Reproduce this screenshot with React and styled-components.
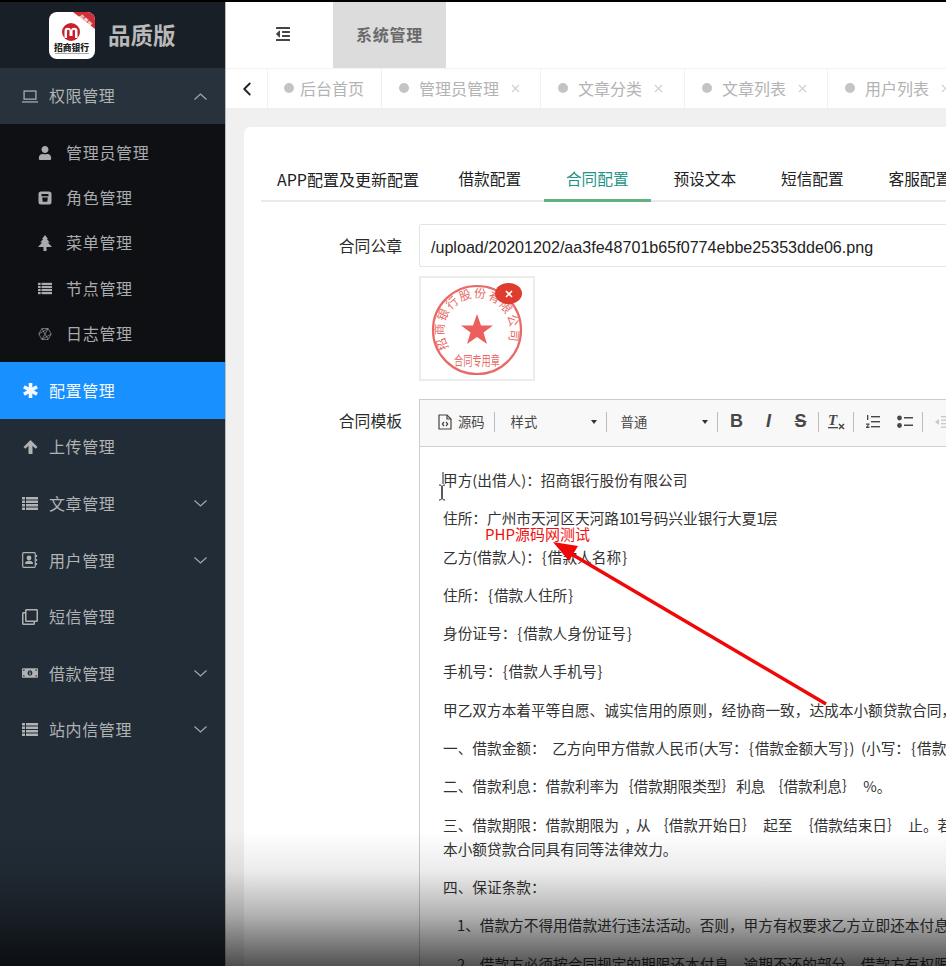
import React from 'react';
import styled, { createGlobalStyle } from 'styled-components';
import { FaUser, FaRegClone, FaMoneyBillAlt, FaOutdent } from 'react-icons/fa';
import { FiChevronLeft, FiX } from 'react-icons/fi';

const GlobalStyle = createGlobalStyle`
  html, body { margin: 0; padding: 0; background: #fff; }
  body { font-family: "Noto Sans CJK SC", "Liberation Sans", sans-serif; }
  * { box-sizing: border-box; }
`;

const Page = styled.div`
  position: relative;
  display: flex;
  width: 946px;
  height: 966px;
  overflow: hidden;
  border-top: 2px solid #000;
`;

const Shade = styled.div`
  position: absolute;
  left: 0;
  right: 0;
  bottom: 0;
  height: 135px;
  pointer-events: none;
  background: linear-gradient(to bottom, rgba(0,0,0,0) 0%, rgba(0,0,0,.08) 30%, rgba(0,0,0,.3) 62%, rgba(0,0,0,.68) 100%);
`;

const Sidebar = styled.aside`
  flex: 0 0 226px;
  background: #222c36;
  border-right: 1px solid #b9bcbf;
  color: #b4b6b8;
`;

const Brand = styled.div`
  display: flex;
  align-items: center;
  height: 66px;
  padding-left: 49px;
  gap: 13px;
  background: #191f27;
`;

const BrandName = styled.span`
  margin-bottom: 3px;
  font-size: 22.5px;
  font-weight: 700;
  color: #b9b9b9;
`;

const MenuRow = styled.div`
  display: flex;
  align-items: center;
  height: ${(p) => (p.$open ? '56px' : '56.6px')};
  padding: 0 18px 0 22px;
  font-size: 16px;
  letter-spacing: .6px;
  background: ${(p) => (p.$active ? '#1890ff' : p.$open ? '#27323d' : 'transparent')};
  color: ${(p) => (p.$active ? '#f4faff' : '#b0b2b4')};
`;

const MenuIcon = styled.span`
  display: flex;
  align-items: center;
  justify-content: center;
  width: 16px;
  height: 16px;
  margin-right: 11px;
  font-size: 16px;
`;

const MenuLabel = styled.span`
  flex: 1;
  padding-bottom: ${(p) => (p.$open ? 2 : 1)}px;
`;

const Caret = styled.svg`
  display: block;
  color: #a4a8ab;
`;

const SubMenu = styled.div`
  padding: 6px 0 5px;
  background: #0e1014;
`;

const SubRow = styled.div`
  display: flex;
  align-items: center;
  height: 45.4px;
  padding-left: 38px;
  font-size: 16px;
  letter-spacing: .7px;
  color: #a9abad;
`;

const SubIcon = styled.span`
  display: flex;
  align-items: center;
  justify-content: center;
  width: 14px;
  height: 14px;
  margin-right: 14px;
  font-size: 14px;
`;

const SubLabel = styled.span`
  padding-bottom: 2px;
`;

const Main = styled.main`
  flex: 1;
  min-width: 0;
  display: flex;
  flex-direction: column;
  background: #f0f0f0;
  overflow: hidden;
`;

const Header = styled.header`
  display: flex;
  align-items: stretch;
  flex: 0 0 66px;
  background: #fff;
`;

const Toggle = styled.div`
  display: flex;
  align-items: center;
  justify-content: center;
  width: 107px;
  padding: 0 0 3px 7px;
  font-size: 16px;
  color: #444;
`;

const HeaderTab = styled.div`
  display: flex;
  align-items: center;
  justify-content: center;
  width: 113px;
  padding-bottom: 3px;
  background: #dcdcdc;
  font-size: 16px;
  font-weight: 700;
  letter-spacing: .7px;
  color: #6a6a6a;
`;

const TabBar = styled.div`
  display: flex;
  flex: 0 0 41px;
  background: #fff;
  border-top: 1px solid #f2f2f2;
  border-bottom: 1px solid #eee;
`;

const Back = styled.div`
  display: flex;
  align-items: center;
  justify-content: center;
  flex: 0 0 41px;
  font-size: 22px;
  color: #222;
`;

const PageTab = styled.div`
  display: flex;
  align-items: center;
  flex: 0 0 ${(p) => p.$w}px;
  padding: 0 0 2px ${(p) => (p.$home ? 16 : 17)}px;
  border-left: 1px solid #f0f0f0;
  font-size: 16px;
  color: #b3b3b3;
  white-space: nowrap;
`;

const Dot = styled.i`
  flex: 0 0 10px;
  height: 10px;
  margin-right: ${(p) => (p.$home ? 6 : 10)}px;
  border-radius: 50%;
  background: #c4c4c4;
`;

const Close = styled.span`
  display: flex;
  margin: 2px 0 0 10px;
  font-size: 13px;
  color: #cfcfcf;
`;

const Card = styled.section`
  flex: 0 0 auto;
  width: 800px;
  height: 900px;
  margin: 18px 0 0 18px;
  padding: 30px 0 0 17px;
  background: #fff;
  border-radius: 6px 0 0 0;
`;

const ConfigTabs = styled.nav`
  display: flex;
  height: 45px;
  border-bottom: 2px solid #e9e9e9;
`;

const ConfigTab = styled.div`
  height: 45px;
  padding-top: 9px;
  padding-left: ${(p) => (p.$first ? '16px' : '22.4px')};
  padding-right: ${(p) => (p.$first ? '17px' : '22.4px')};
  font-size: ${(p) => (p.$first ? '16px' : '15.7px')};
  line-height: 26px;
  white-space: nowrap;
  color: ${(p) => (p.$active ? '#1f9488' : '#222')};
  border-bottom: ${(p) => (p.$active ? '3px solid #5fb382' : 'none')};
`;

const FormRow = styled.div`
  display: flex;
  margin-top: ${(p) => p.$mt}px;
`;

const Label = styled.label`
  flex: 0 0 141px;
  padding-top: 10px;
  text-align: right;
  font-size: 15.8px;
  line-height: 24px;
  color: #2b2b2b;
`;

const Field = styled.div`
  margin-left: 17px;
  flex: 1;
  min-width: 0;
`;

const Input = styled.div`
  height: 43px;
  padding-left: 11px;
  border: 1px solid #e4e4e4;
  border-radius: 2px;
  font-family: "Liberation Sans", sans-serif;
  font-size: 16.1px;
  line-height: 44px;
  color: #222;
`;

const Preview = styled.div`
  position: relative;
  width: 116px;
  height: 105px;
  margin-top: 9px;
  border: 2px solid #ececec;
`;

const Remove = styled.span`
  position: absolute;
  top: 5px;
  right: 11px;
  display: flex;
  align-items: center;
  justify-content: center;
  width: 27px;
  height: 21px;
  border-radius: 50%;
  background: #dd3c2f;
  color: #fff;
  font-size: 10px;
`;

const Editor = styled.div`
  border: 1px solid #ccc;
  height: 700px;
`;

const Toolbar = styled.div`
  display: flex;
  align-items: center;
  height: 47px;
  padding: 0 0 3px 18px;
  background: #f8f8f8;
  border-bottom: 1px solid #d1d1d1;
  color: #474747;
`;

const SourceBtn = styled.div`
  display: flex;
  align-items: center;
  gap: 6px;
  font-size: 13.3px;
  padding-right: 9px;
`;

const Sep = styled.span`
  flex: 0 0 1px;
  height: 20px;
  margin: ${(p) => p.$m || '0 1px'};
  background: #bcbcbc;
`;

const Combo = styled.div`
  display: flex;
  align-items: center;
  justify-content: space-between;
  width: ${(p) => p.$w}px;
  padding: 0 9px 0 ${(p) => p.$pl}px;
  font-size: 13.3px;
  &::after {
    content: "";
    border-top: 4px solid #333;
    border-left: 3.5px solid transparent;
    border-right: 3.5px solid transparent;
  }
`;

const ToolBtn = styled.button`
  display: flex;
  align-items: center;
  justify-content: center;
  flex: 0 0 32px;
  height: 24px;
  padding: 0;
  border: 0;
  background: none;
  color: ${(p) => (p.$off ? '#c9c9c9' : '#474747')};
  font-family: "Liberation Sans", sans-serif;
  font-size: 18px;
  font-weight: 700;
  font-style: ${(p) => (p.$italic ? 'italic' : 'normal')};
  text-decoration: ${(p) => (p.$strike ? 'line-through' : 'none')};
`;

const Content = styled.div`
  padding: 21px 0 0 23px;
  font-size: 14.67px;
  line-height: 24px;
  color: #333;
  white-space: pre;
`;

const Para = styled.p`
  margin: 0 0 ${(p) => (p.$tight ? 0 : 14.3)}px;
  padding-left: ${(p) => (p.$indent ? 14 : 0)}px;
`;

const Brace = styled.span`
  margin: 0 1px;
`;

const Digits = styled.span`
  letter-spacing: -1.4px;
`;

const Watermark = styled.span`
  position: absolute;
  left: 485px;
  top: 522px;
  font-size: 15px;
  line-height: 20px;
  color: #f01010;
  white-space: nowrap;
`;

const Arrow = styled.svg`
  position: absolute;
  left: 540px;
  top: 530px;
`;

const Cursor = styled.svg`
  position: absolute;
  left: 436px;
  top: 470px;
`;

const ChevronUp = () => (
  <Caret width="13" height="7" viewBox="0 0 13 7" fill="none" stroke="currentColor" strokeWidth="1.2">
    <path d="M.5 6.500l6-5.500 6 5.500" />
  </Caret>
);

const ChevronDown = () => (
  <Caret width="13" height="7" viewBox="0 0 13 7" fill="none" stroke="currentColor" strokeWidth="1.2">
    <path d="M.5.500l6 5.500 6-5.500" />
  </Caret>
);

const LaptopIcon = () => (
  <svg width="17" height="13" viewBox="0 0 17 13" fill="none" stroke="currentColor" strokeWidth="1.300">
    <rect x="2.200" y=".7" width="12.600" height="8.600" />
    <path d="M0 12.300h17" />
  </svg>
);

const ListIcon = () => (
  <svg width="16" height="13" viewBox="0 0 16 13" fill="currentColor">
    <rect y="0" width="3" height="2.500" />
    <rect y="3.500" width="3" height="2.500" />
    <rect y="7" width="3" height="2.500" />
    <rect y="10.500" width="3" height="2.500" />
    <rect x="4" y="0" width="12" height="2.500" />
    <rect x="4" y="3.500" width="12" height="2.500" />
    <rect x="4" y="7" width="12" height="2.500" />
    <rect x="4" y="10.500" width="12" height="2.500" />
  </svg>
);

const AsteriskIcon = () => (
  <svg width="15" height="15" viewBox="0 0 14 14" stroke="currentColor" strokeWidth="3.400">
    <path d="M7 0v14M.9 3.500l12.200 7M13.100 3.500L.9 10.500" />
  </svg>
);

const ArrowUpIcon = () => (
  <svg width="15" height="14" viewBox="0 0 15 14" fill="currentColor">
    <path d="M7.500 0l7 7-1.800 1.800-3.200-3V14h-4V5.800l-3.200 3L.5 7z" />
  </svg>
);

const TreeIcon = () => (
  <svg width="14" height="16" viewBox="0 0 14 16" fill="currentColor">
    <path d="M7 0l3 4H8.800l3 3.500H9.800L14 12H8.500v4h-3v-4H0l4.200-4.500H2.200l3-3.500H4z" />
  </svg>
);

const RoleIcon = () => (
  <svg width="14" height="14" viewBox="0 0 14 14">
    <path fillRule="evenodd" fill="currentColor" d="M3 .5h8A2.500 2.500 0 0 1 13.500 3v8a2.500 2.500 0 0 1-2.500 2.500H3A2.500 2.500 0 0 1 .5 11V3A2.500 2.500 0 0 1 3 .5zm.5 2.500v2.200h7V3zm.7 3.500l.5 4.200h4.600l.5-4.200z" />
  </svg>
);

const LogIcon = () => (
  <svg width="18" height="16" viewBox="0 0 18 16" fill="none" stroke="currentColor" strokeWidth=".8">
    <path d="M5 1h8l4 7-4 7H5L1 8z" />
    <path d="M5 1l8 14M13 1L5 15M1 8l12-7M17 8L5 15" />
  </svg>
);

const ContactIcon = () => (
  <svg width="16" height="16" viewBox="0 0 16 16" fill="none">
    <rect x=".7" y=".7" width="12.600" height="14.600" rx="1" stroke="currentColor" strokeWidth="1.200" />
    <circle cx="7" cy="6" r="2.400" fill="currentColor" />
    <path d="M3 12c0-2.500 1.500-3.300 4-3.300s4 .8 4 3.300z" fill="currentColor" />
    <path d="M14.500 3v2M14.500 7v2M14.500 11v2" stroke="currentColor" strokeWidth="1.200" />
  </svg>
);

const Logo = () => (
  <svg width="46" height="47" viewBox="0 0 46 47">
    <rect width="46" height="47" rx="8" fill="#fff" />
    <path d="M24 0h14a8 8 0 0 1 8 8v9z" fill="#d22f3a" />
    <text x="36" y="10" fontSize="5" fontWeight="700" fill="#fff" textAnchor="middle" transform="rotate(42 36 9)">品质版</text>
    <circle cx="22" cy="20" r="9" fill="#c9202c" />
    <path d="M15.500 26v-7a3.200 3.200 0 0 1 6.500 0 3.200 3.200 0 0 1 6.500 0v7h-2.500v-7a1 1 0 0 0-2.500 0v5h-3v-5a1 1 0 0 0-2.500 0v7z" fill="#fff" />
    <text x="22.500" y="38.500" fontSize="8.800" fontWeight="900" fill="#222" textAnchor="middle" fontFamily="Noto Sans CJK SC">招商银行</text>
    <rect x="6" y="41" width="34" height="1" fill="#aaa" />
  </svg>
);

const Stamp = () => (
  <svg width="112" height="101" viewBox="0 0 112 101">
    <defs>
      <path id="stamp-arc" d="M28 70A33 33 0 1 1 84 70" />
    </defs>
    <circle cx="56" cy="52" r="44" fill="none" stroke="#e86a66" strokeWidth="2.200" />
    <polygon fill="#ec5f5c" points="56,36 60,47.500 72,47.500 62.500,54.500 66,66 56,59 46,66 49.500,54.500 40,47.500 52,47.500" />
    <text fontSize="12" fill="#e86a66" fontFamily="Liberation Serif, Noto Sans CJK SC">
      <textPath href="#stamp-arc" textLength="132">招商银行股份有限公司</textPath>
    </text>
    <text x="56" y="87" fontSize="13" fill="#e86a66" textAnchor="middle" textLength="46" lengthAdjust="spacingAndGlyphs">合同专用章</text>
  </svg>
);

const SourceIcon = () => (
  <svg width="14" height="16" viewBox="0 0 14 16" fill="none" stroke="#444" strokeWidth="1.200">
    <path d="M1 1h8l4 4v10H1z" />
    <path d="M9 1v4h4" />
    <path d="M6 8L4.300 10 6 12M8 8l1.700 2L8 12" />
  </svg>
);

const ClearIcon = () => (
  <svg width="18" height="18" viewBox="0 0 18 18">
    <text x="1" y="12" fontSize="15" fontWeight="700" fontStyle="italic" fill="#474747" fontFamily="Liberation Serif">T</text>
    <rect x="1" y="14" width="10" height="1.300" fill="#474747" />
    <path d="M12 11l5 5M17 11l-5 5" stroke="#474747" strokeWidth="1.500" />
  </svg>
);

const OrderedIcon = () => (
  <svg width="15" height="15" viewBox="0 0 15 15" fill="#474747">
    <rect x="6" y="2" width="9" height="1.400" />
    <rect x="6" y="7" width="9" height="1.400" />
    <rect x="6" y="12" width="9" height="1.400" />
    <rect x="2" y="1" width="1.300" height="5" />
    <path d="M1 9.500h3.500v1L2.500 12.500h2V14H1v-1l2-2.200H1z" />
  </svg>
);

const BulletIcon = () => (
  <svg width="16" height="14" viewBox="0 0 16 14" fill="#474747">
    <circle cx="2.500" cy="3" r="2.400" />
    <circle cx="2.500" cy="10.500" r="2.400" />
    <rect x="7" y="2" width="9" height="1.500" />
    <rect x="7" y="9.500" width="9" height="1.500" />
  </svg>
);

const OutdentIcon = () => (
  <svg width="16" height="14" viewBox="0 0 16 14" fill="#c9c9c9">
    <rect x="7" y="1" width="9" height="1.400" />
    <rect x="7" y="4.500" width="9" height="1.400" />
    <rect x="7" y="8" width="9" height="1.400" />
    <rect x="7" y="11.500" width="9" height="1.400" />
    <path d="M5 4v6L1 7z" />
  </svg>
);

const subItems = [
  { name: '管理员管理', icon: <FaUser /> },
  { name: '角色管理', icon: <RoleIcon /> },
  { name: '菜单管理', icon: <TreeIcon /> },
  { name: '节点管理', icon: <ListIcon /> },
  { name: '日志管理', icon: <LogIcon /> },
];

const menuItems = [
  { name: '配置管理', icon: <AsteriskIcon />, active: true },
  { name: '上传管理', icon: <ArrowUpIcon /> },
  { name: '文章管理', icon: <ListIcon />, more: true },
  { name: '用户管理', icon: <ContactIcon />, more: true },
  { name: '短信管理', icon: <FaRegClone /> },
  { name: '借款管理', icon: <FaMoneyBillAlt />, more: true },
  { name: '站内信管理', icon: <ListIcon />, more: true },
];

const pageTabs = [
  { name: '后台首页', w: 114, home: true },
  { name: '管理员管理', w: 159 },
  { name: '文章分类', w: 144 },
  { name: '文章列表', w: 143 },
  { name: '用户列表', w: 143 },
];

const configTabs = ['APP配置及更新配置', '借款配置', '合同配置', '预设文本', '短信配置', '客服配置'];

const paragraphs = [
  '乙方(借款人)：{借款人名称}',
  '住所：{借款人住所}',
  '身份证号：{借款人身份证号}',
  '手机号：{借款人手机号}',
  '甲乙双方本着平等自愿、诚实信用的原则，经协商一致，达成本小额贷款合同，并保证共同遵守执行。',
  '一、借款金额：  乙方向甲方借款人民币(大写：{借款金额大写})  (小写：{借款金额})',
  '二、借款利息：借款利率为｛借款期限类型｝利息 ｛借款利息｝  %。',
];

// ascii braces sit a little wider in the reference than in this font
const withBraces = (text) =>
  text.split(/([{}])/).map((part, i) => (part === '{' || part === '}' ? <Brace key={i}>{part}</Brace> : part));

export default function App() {
  return (
    <Page>
      <GlobalStyle />
      <Sidebar>
        <Brand>
          <Logo />
          <BrandName>品质版</BrandName>
        </Brand>
        <MenuRow $open>
          <MenuIcon><LaptopIcon /></MenuIcon>
          <MenuLabel $open>权限管理</MenuLabel>
          <ChevronUp />
        </MenuRow>
        <SubMenu>
          {subItems.map((item) => (
            <SubRow key={item.name}>
              <SubIcon>{item.icon}</SubIcon>
              <SubLabel>{item.name}</SubLabel>
            </SubRow>
          ))}
        </SubMenu>
        {menuItems.map((item) => (
          <MenuRow key={item.name} $active={item.active}>
            <MenuIcon>{item.icon}</MenuIcon>
            <MenuLabel>{item.name}</MenuLabel>
            {item.more ? <ChevronDown /> : null}
          </MenuRow>
        ))}
      </Sidebar>

      <Main>
        <Header>
          <Toggle><FaOutdent /></Toggle>
          <HeaderTab>系统管理</HeaderTab>
        </Header>
        <TabBar>
          <Back><FiChevronLeft /></Back>
          {pageTabs.map((tab) => (
            <PageTab key={tab.name} $w={tab.w} $home={tab.home}>
              <Dot $home={tab.home} />
              {tab.name}
              {tab.home ? null : <Close><FiX /></Close>}
            </PageTab>
          ))}
        </TabBar>
        <Card>
          <ConfigTabs>
            {configTabs.map((tab, i) => (
              <ConfigTab key={tab} $first={i === 0} $active={i === 2}>{tab}</ConfigTab>
            ))}
          </ConfigTabs>
          <FormRow $mt={22}>
            <Label>合同公章</Label>
            <Field>
              <Input>/upload/20201202/aa3fe48701b65f0774ebbe25353dde06.png</Input>
              <Preview>
                <Stamp />
                <Remove><FiX strokeWidth={4} /></Remove>
              </Preview>
            </Field>
          </FormRow>
          <FormRow $mt={18}>
            <Label>合同模板</Label>
            <Field>
              <Editor>
                <Toolbar>
                  <SourceBtn><SourceIcon />源码</SourceBtn>
                  <Sep $m="0" />
                  <Combo $w={111} $pl={16}>样式</Combo>
                  <Sep $m="0" />
                  <Combo $w={110} $pl={14}>普通</Combo>
                  <Sep $m="0 3px 0 0" />
                  <ToolBtn>B</ToolBtn>
                  <ToolBtn $italic>I</ToolBtn>
                  <ToolBtn $strike>S</ToolBtn>
                  <Sep />
                  <ToolBtn><ClearIcon /></ToolBtn>
                  <Sep $m="0 3px 0 1px" />
                  <ToolBtn><OrderedIcon /></ToolBtn>
                  <ToolBtn><BulletIcon /></ToolBtn>
                  <Sep $m="0 3px 0 1px" />
                  <ToolBtn $off><OutdentIcon /></ToolBtn>
                </Toolbar>
                <Content>
                  <Para>甲方(出借人)：招商银行股份有限公司</Para>
                  <Para>住所：广州市天河区天河路<Digits>101</Digits>号码兴业银行大夏<Digits>1</Digits>层</Para>
                  {paragraphs.map((text) => <Para key={text}>{withBraces(text)}</Para>)}
                  <Para $tight>三、借款期限：借款期限为  ,  从 ｛借款开始日｝  起至  ｛借款结束日｝  止。若实际放款日与</Para>
                  <Para>本小额贷款合同具有同等法律效力。</Para>
                  <Para>四、保证条款：</Para>
                  <Para $indent>1、借款方不得用借款进行违法活动。否则，甲方有权要求乙方立即还本付息</Para>
                  <Para $indent>2、借款方必须按合同规定的期限还本付息。逾期不还的部分，借款方有权限</Para>
                </Content>
              </Editor>
            </Field>
          </FormRow>
        </Card>
      </Main>

      <Cursor width="12" height="32" viewBox="0 0 12 32" fill="none" stroke="#222" strokeWidth="1">
        <path d="M7 0v12M3 13c2 0 3 1 3 2v11c0 1-1 2-3 2M9 13c-2 0-3 1-3 2v11c0 1 1 2 3 2" />
      </Cursor>
      <Watermark>PHP源码网测试</Watermark>
      <Arrow width="300" height="180" viewBox="0 0 300 180">
        <path d="M286 172L28 20" stroke="#f00808" strokeWidth="3.500" fill="none" />
        <path d="M13 10L38 14 29 29z" fill="#f00808" />
      </Arrow>
      <Shade />
    </Page>
  );
}
